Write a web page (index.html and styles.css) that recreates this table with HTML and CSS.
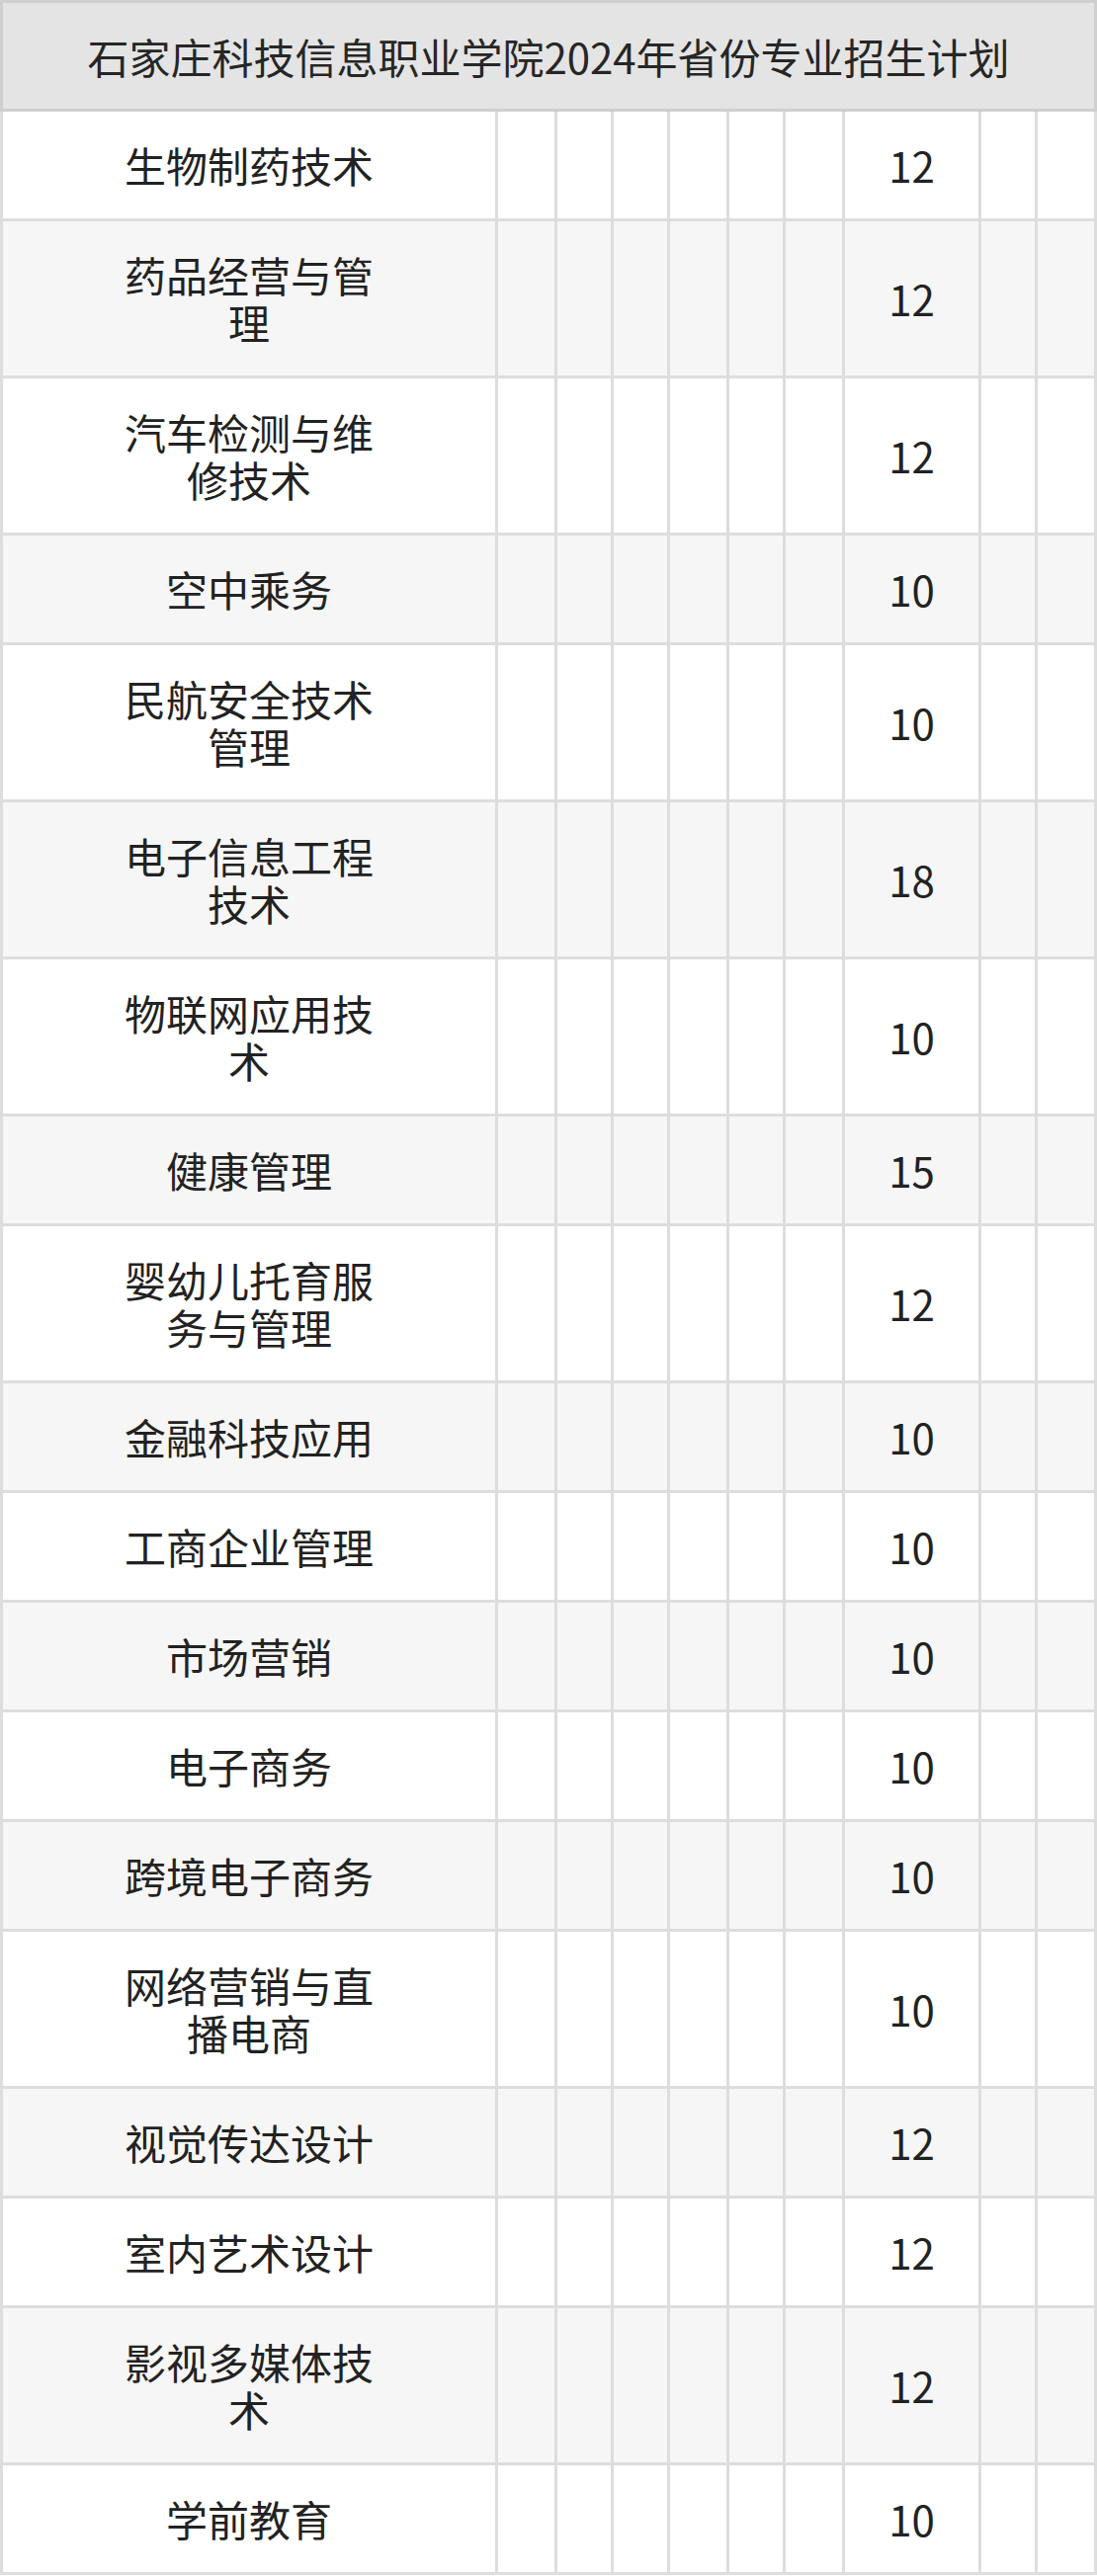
FILE: index.html
```html
<!DOCTYPE html>
<html lang="zh-CN">
<head>
<meta charset="utf-8">
<title>石家庄科技信息职业学院2024年省份专业招生计划</title>
<link rel="stylesheet" href="styles.css">
</head>
<body>
<div class="plan">
  <div class="plan-title">石家庄科技信息职业学院2024年省份专业招生计划</div>
  <div class="plan-body">
    <div class="row"><div class="cell name">生物制药技术</div><div class="cell"></div><div class="cell"></div><div class="cell"></div><div class="cell"></div><div class="cell"></div><div class="cell"></div><div class="cell num">12</div><div class="cell"></div><div class="cell"></div></div>
    <div class="row alt"><div class="cell name">药品经营与管理</div><div class="cell"></div><div class="cell"></div><div class="cell"></div><div class="cell"></div><div class="cell"></div><div class="cell"></div><div class="cell num">12</div><div class="cell"></div><div class="cell"></div></div>
    <div class="row"><div class="cell name">汽车检测与维修技术</div><div class="cell"></div><div class="cell"></div><div class="cell"></div><div class="cell"></div><div class="cell"></div><div class="cell"></div><div class="cell num">12</div><div class="cell"></div><div class="cell"></div></div>
    <div class="row alt"><div class="cell name">空中乘务</div><div class="cell"></div><div class="cell"></div><div class="cell"></div><div class="cell"></div><div class="cell"></div><div class="cell"></div><div class="cell num">10</div><div class="cell"></div><div class="cell"></div></div>
    <div class="row"><div class="cell name">民航安全技术管理</div><div class="cell"></div><div class="cell"></div><div class="cell"></div><div class="cell"></div><div class="cell"></div><div class="cell"></div><div class="cell num">10</div><div class="cell"></div><div class="cell"></div></div>
    <div class="row alt"><div class="cell name">电子信息工程技术</div><div class="cell"></div><div class="cell"></div><div class="cell"></div><div class="cell"></div><div class="cell"></div><div class="cell"></div><div class="cell num">18</div><div class="cell"></div><div class="cell"></div></div>
    <div class="row"><div class="cell name">物联网应用技术</div><div class="cell"></div><div class="cell"></div><div class="cell"></div><div class="cell"></div><div class="cell"></div><div class="cell"></div><div class="cell num">10</div><div class="cell"></div><div class="cell"></div></div>
    <div class="row alt"><div class="cell name">健康管理</div><div class="cell"></div><div class="cell"></div><div class="cell"></div><div class="cell"></div><div class="cell"></div><div class="cell"></div><div class="cell num">15</div><div class="cell"></div><div class="cell"></div></div>
    <div class="row"><div class="cell name">婴幼儿托育服务与管理</div><div class="cell"></div><div class="cell"></div><div class="cell"></div><div class="cell"></div><div class="cell"></div><div class="cell"></div><div class="cell num">12</div><div class="cell"></div><div class="cell"></div></div>
    <div class="row alt"><div class="cell name">金融科技应用</div><div class="cell"></div><div class="cell"></div><div class="cell"></div><div class="cell"></div><div class="cell"></div><div class="cell"></div><div class="cell num">10</div><div class="cell"></div><div class="cell"></div></div>
    <div class="row"><div class="cell name">工商企业管理</div><div class="cell"></div><div class="cell"></div><div class="cell"></div><div class="cell"></div><div class="cell"></div><div class="cell"></div><div class="cell num">10</div><div class="cell"></div><div class="cell"></div></div>
    <div class="row alt"><div class="cell name">市场营销</div><div class="cell"></div><div class="cell"></div><div class="cell"></div><div class="cell"></div><div class="cell"></div><div class="cell"></div><div class="cell num">10</div><div class="cell"></div><div class="cell"></div></div>
    <div class="row"><div class="cell name">电子商务</div><div class="cell"></div><div class="cell"></div><div class="cell"></div><div class="cell"></div><div class="cell"></div><div class="cell"></div><div class="cell num">10</div><div class="cell"></div><div class="cell"></div></div>
    <div class="row alt"><div class="cell name">跨境电子商务</div><div class="cell"></div><div class="cell"></div><div class="cell"></div><div class="cell"></div><div class="cell"></div><div class="cell"></div><div class="cell num">10</div><div class="cell"></div><div class="cell"></div></div>
    <div class="row"><div class="cell name">网络营销与直播电商</div><div class="cell"></div><div class="cell"></div><div class="cell"></div><div class="cell"></div><div class="cell"></div><div class="cell"></div><div class="cell num">10</div><div class="cell"></div><div class="cell"></div></div>
    <div class="row alt"><div class="cell name">视觉传达设计</div><div class="cell"></div><div class="cell"></div><div class="cell"></div><div class="cell"></div><div class="cell"></div><div class="cell"></div><div class="cell num">12</div><div class="cell"></div><div class="cell"></div></div>
    <div class="row"><div class="cell name">室内艺术设计</div><div class="cell"></div><div class="cell"></div><div class="cell"></div><div class="cell"></div><div class="cell"></div><div class="cell"></div><div class="cell num">12</div><div class="cell"></div><div class="cell"></div></div>
    <div class="row alt"><div class="cell name">影视多媒体技术</div><div class="cell"></div><div class="cell"></div><div class="cell"></div><div class="cell"></div><div class="cell"></div><div class="cell"></div><div class="cell num">12</div><div class="cell"></div><div class="cell"></div></div>
    <div class="row"><div class="cell name">学前教育</div><div class="cell"></div><div class="cell"></div><div class="cell"></div><div class="cell"></div><div class="cell"></div><div class="cell"></div><div class="cell num">10</div><div class="cell"></div><div class="cell"></div></div>
  </div>
</div>
</body>
</html>
```

FILE: styles.css
```css
html, body {
  margin: 0;
  padding: 0;
  background: #ffffff;
}

body {
  font-family: "Noto Sans CJK SC", "Noto Sans", sans-serif;
  color: #222222;
  font-size: 42px;
  line-height: 48px;
}

.plan {
  width: 1110px;
}

.plan-title {
  box-sizing: border-box;
  height: 113px;
  border: 3px solid #cfcfcf;
  background: #e4e4e4;
  display: flex;
  align-items: center;
  justify-content: center;
  color: #262626;
  white-space: nowrap;
}

.plan-body {
  display: flex;
  flex-direction: column;
  gap: 3px;
  padding: 0 3px 3px 3px;
  background: #dddddd;
}

.row {
  display: grid;
  grid-template-columns: 498px 57px 54px 54px 57px 54px 57px 135px 54px 57px;
  column-gap: 3px;
}

.cell {
  background: #ffffff;
  display: flex;
  align-items: center;
  justify-content: center;
  text-align: center;
  padding: 30px 0;
}

.row.alt .cell {
  background: #f6f6f6;
}

.cell.name {
  padding: 30px 110px;
}
```
